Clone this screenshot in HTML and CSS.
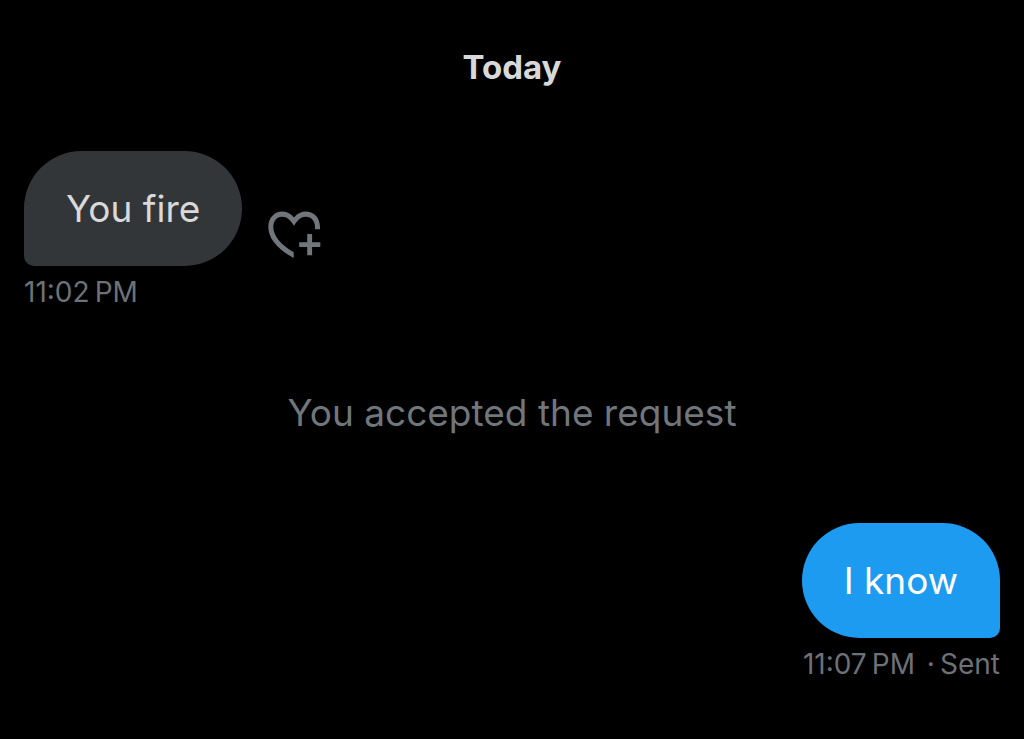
FILE: index.html
```html
<!DOCTYPE html>
<html lang="en">
<head>
    <meta charset="UTF-8">
    <meta name="viewport" content="width=device-width, initial-scale=1.0">
    <title>Messages</title>
    <link rel="stylesheet" href="styles.css">
</head>
<body>

    <main class="chat">
        <h1 class="day">Today</h1>

        <div class="message received">
            <div class="row">
                <p class="bubble">You fire</p>
                <button type="button" class="btn-react" aria-label="Add reaction">
                    <svg viewBox="0 0 54 48" width="54" height="48" fill="currentColor" aria-hidden="true">
                        <path d="M25.7 47C9 38 .3 27 .3 16C.3 6.5 7 .6 14 .6C18.5 .6 22.8 2.6 26 6.4C29.2 2.6 33.5 .6 38 .6C46 .6 52 7 52 16V18.3H47V16C47 9.5 43 5.7 38 5.7C33 5.7 29.5 9 26 14.7C22.5 9 19 5.7 14 5.7C8.6 5.7 5.3 10 5.3 16C5.3 24.5 12 33 25.7 41.3Z"/>
                        <path d="M39.2 23H44.1V31.2H52.3V36.1H44.1V44.2H39.2V36.1H31.2V31.2H39.2Z"/>
                    </svg>
                </button>
            </div>
            <p class="meta"><time>11:02&#8239;PM</time></p>
        </div>

        <p class="notice">You accepted the request</p>

        <div class="message sent">
            <p class="bubble">I know</p>
            <p class="meta"><time>11:07&#8239;PM</time> <span class="status">·&thinsp;Sent</span></p>
        </div>
    </main>

</body>
</html>
```
FILE: styles.css
```css
body {
    font-family: Inter, 'Liberation Sans', sans-serif;
    background-color: #000;
    color: #d9d9d9;
    margin: 0;
}

h1, p {
    margin: 0;
}

.chat {
    padding: 48px 24px;
}

.day {
    font-size: 33px;
    line-height: 39px;
    font-weight: 700;
    text-align: center;
    margin-bottom: 64px;
}

.message {
    display: flex;
    flex-direction: column;
    align-items: flex-start;
}

.row {
    display: flex;
    align-items: flex-end;
    gap: 26px;
}

.bubble {
    font-size: 37px;
    line-height: 47px;
    padding: 34px 42px;
    border-radius: 58px;
}

.received .bubble {
    background-color: #333639;
    border-bottom-left-radius: 10px;
}

.sent {
    align-items: flex-end;
}

.sent .bubble {
    background-color: #1d9bf0;
    color: #fff;
    border-bottom-right-radius: 10px;
}

.btn-react {
    background: none;
    border: none;
    padding: 0 0 7px;
    color: #71767b;
    cursor: pointer;
}

.btn-react svg {
    display: block;
}

.meta {
    font-size: 28px;
    line-height: 36px;
    margin-top: 8px;
    color: #6e7176;
}

.status {
    margin-left: 4px;
}

.notice {
    font-size: 37px;
    line-height: 48px;
    text-align: center;
    color: #71767b;
    margin: 79px 0 86px;
}
```
